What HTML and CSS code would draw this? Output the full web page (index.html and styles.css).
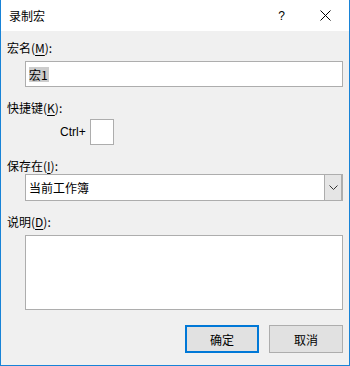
FILE: index.html
```html
<!DOCTYPE html>
<html lang="zh-CN">
<head>
    <meta charset="UTF-8">
    <title>录制宏</title>
    <link rel="stylesheet" href="styles.css">
</head>
<body>
    <div class="window">
        <!-- title bar -->
        <div class="titlebar">
            <span class="title">录制宏</span>
            <span class="help">?</span>
            <svg class="close" width="11" height="11" viewBox="0 0 11 11">
                <path d="M0.5 0.5 L10.5 10.5 M10.5 0.5 L0.5 10.5" stroke="#000" stroke-width="1" fill="none"/>
            </svg>
        </div>

        <div class="content">
            <div class="label label-first">宏名(<u>M</u>):</div>
            <div class="field name-field"><span class="selected">宏1</span></div>

            <div class="label">快捷键(<u>K</u>):</div>
            <div class="shortcut">
                <span class="ctrl">Ctrl+</span>
                <div class="field key-box"></div>
            </div>

            <div class="label">保存在(<u>I</u>):</div>
            <div class="field select">
                <span class="select-text">当前工作簿</span>
                <span class="select-btn">
                    <svg width="9" height="5" viewBox="0 0 9 5">
                        <path d="M0.5 0.5 L4.5 4.5 L8.5 0.5" stroke="#333" stroke-width="1" fill="none"/>
                    </svg>
                </span>
            </div>

            <div class="label">说明(<u>D</u>):</div>
            <div class="field desc"></div>

            <div class="buttons">
                <button class="btn btn-default">确定</button>
                <button class="btn">取消</button>
            </div>
        </div>
    </div>
</body>
</html>
```

FILE: styles.css
```css
body {
    margin: 0;
    font-family: "Noto Sans CJK SC", "Liberation Sans", sans-serif;
    font-size: 12px;
    color: #000;
}
.window {
    width: 348px;
    height: 365px;
    border: 1px solid #1883d7;
    border-top: none;
    background-color: #f0f0f0;
    display: flex;
    flex-direction: column;
}
.titlebar {
    height: 31px;
    background-color: #fff;
    display: flex;
    align-items: center;
    position: relative;
}
.title {
    margin-left: 8px;
    font-size: 12px;
    flex: 1;
}
.help {
    font-family: "Liberation Sans", sans-serif;
    font-size: 12px;
    margin-right: 35px;
}
.close {
    margin-right: 18px;
}
.content {
    padding: 9px 5px 0 6px;
    display: flex;
    flex-direction: column;
}
.label {
    height: 16px;
    line-height: 16px;
    margin-top: 13px;
}
.label-first {
    margin-top: 0;
}
.label u {
    text-underline-offset: 2px;
}
.field {
    background-color: #fff;
    border: 1px solid #adadad;
    box-sizing: border-box;
}
.name-field {
    margin: 5px 0 0 18px;
    height: 26px;
    width: 318px;
    display: flex;
    align-items: center;
    padding-left: 3px;
}
.selected {
    background-color: #cccccc;
    line-height: 15px;
    padding-right: 1px;
}
.shortcut {
    display: flex;
    align-items: center;
    margin-top: 3px;
    padding-left: 53px;
}
.ctrl {
    font-family: "Liberation Sans", sans-serif;
    margin-right: 4px;
}
.key-box {
    width: 24px;
    height: 26px;
}
.select {
    margin: 0 0 0 18px;
    height: 27px;
    width: 318px;
    display: flex;
    align-items: stretch;
}
.select-text {
    flex: 1;
    line-height: 25px;
    padding-left: 3px;
}
.select-btn {
    width: 16px;
    background-color: #e5e5e5;
    border-left: 1px solid #adadad;
    border-right: 1px solid #adadad;
    display: flex;
    align-items: center;
    justify-content: center;
}
.desc {
    margin: 5px 0 0 18px;
    height: 75px;
    width: 318px;
}
.buttons {
    display: flex;
    justify-content: flex-end;
    gap: 10px;
    margin-top: 15px;
    padding-right: 1px;
}
.btn {
    width: 74px;
    height: 28px;
    background-color: #e1e1e1;
    border: 1px solid #adadad;
    font-family: "Noto Sans CJK SC", sans-serif;
    font-size: 12px;
    padding: 0;
}
.btn-default {
    border: 2px solid #0078d7;
}
```
